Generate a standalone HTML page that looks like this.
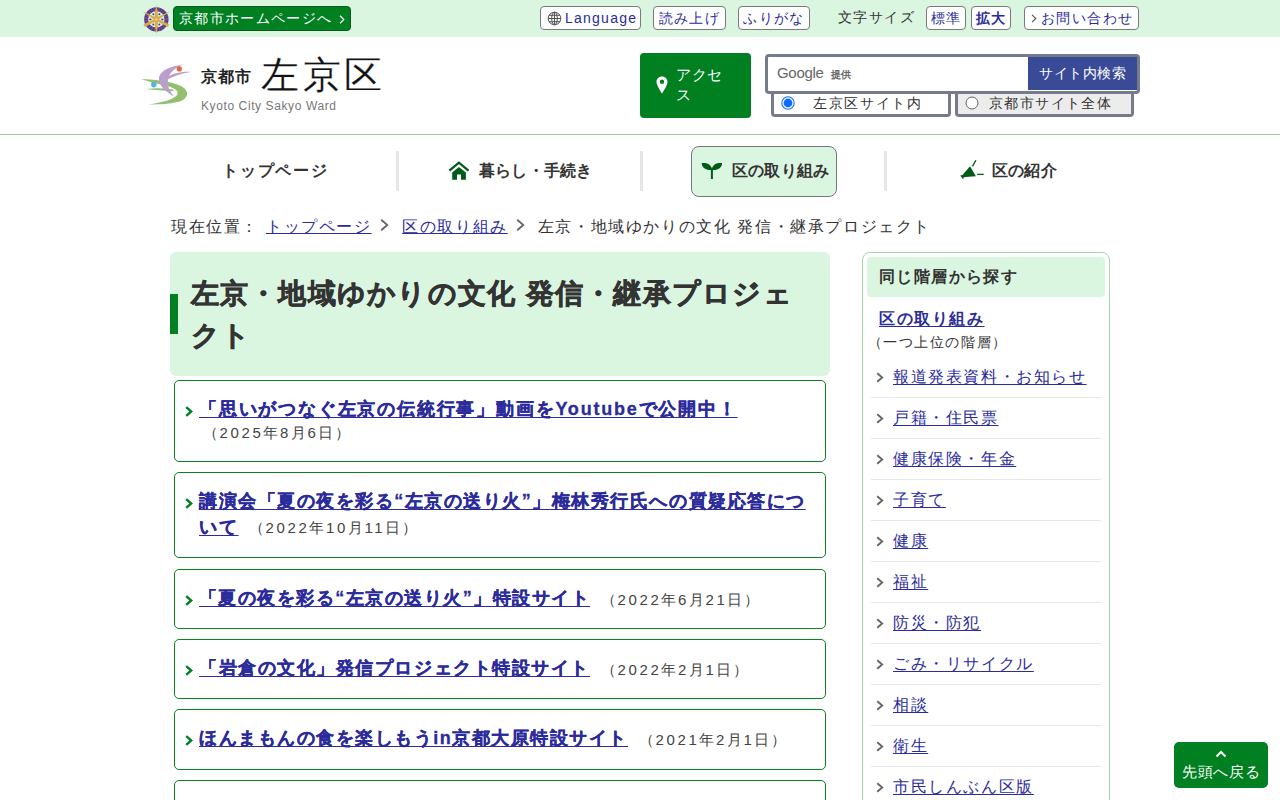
<!DOCTYPE html>
<html lang="ja">
<head>
<meta charset="utf-8">
<title>左京・地域ゆかりの文化 発信・継承プロジェクト</title>
<style>
*{box-sizing:border-box;margin:0;padding:0}
html,body{width:1280px;height:800px;overflow:hidden;background:#fff}
body{font-family:"Liberation Sans",sans-serif;color:#333;position:relative}
a{color:#2b2b9c;text-decoration:underline;text-underline-offset:2px}
.abs{position:absolute}
.nw{white-space:nowrap}
#topbar{position:absolute;left:0;top:0;width:1280px;height:37px;background:#daf5e0}
.tbtn{position:absolute;top:6px;height:24px;border:1px solid #7a7a7a;border-radius:4px;background:#fff;color:#2b2b9c;font-size:14px;line-height:22px;letter-spacing:1.4px;text-align:center;white-space:nowrap}
#homebtn{position:absolute;left:173px;top:6px;width:178px;height:25px;background:#008020;border:1px solid #0b5c1b;border-radius:4px;color:#fff;font-size:14px;line-height:23px;padding-left:5px;letter-spacing:1.35px;white-space:nowrap}
#hdrline{position:absolute;left:0;top:134px;width:1280px;height:1px;background:#9cc9a3}
#access{position:absolute;left:640px;top:53px;width:111px;height:65px;background:#008020;border-radius:4px;color:#fff;font-size:15px;line-height:20px;letter-spacing:0.6px}
#search{position:absolute;z-index:2;left:765px;top:54px;width:375px;height:39.5px;border:3px solid #747b8b;border-radius:4px;background:#fff}
#sbtn{position:absolute;right:0;top:0;width:109px;height:33px;background:#394b97;color:#fff;font-size:14px;line-height:32px;text-align:center;letter-spacing:0.5px}
.rbox{position:absolute;top:91px;height:26px;border:3px solid #747b8b;border-top:none;border-radius:0 0 4px 4px;font-size:14px;line-height:24px;letter-spacing:1.4px;white-space:nowrap;color:#333}
.nav{position:absolute;top:146px;height:51px;font-size:16px;font-weight:bold;color:#333;line-height:50px;white-space:nowrap}
.sep{position:absolute;top:151px;width:3px;height:40px;background:#e6e6e6}
#crumb{position:absolute;left:171px;top:215px;font-size:16px;letter-spacing:1.6px;line-height:24px;white-space:nowrap}
#crumb a{text-underline-offset:1px}
#title{position:absolute;left:170px;top:252px;width:660px;height:124px;background:#daf5e0;border-radius:6px}
.item{position:absolute;left:174px;width:652px;border:1px solid #0a8222;border-radius:5px}
.chev{position:absolute;left:10px}
.ilink{position:absolute;left:24px;font-size:18px;font-weight:bold;line-height:25.6px;letter-spacing:1.8px;white-space:nowrap;-webkit-text-stroke:0.3px #2b2b9c}
.dg{letter-spacing:2.65px}
.idate{position:absolute;font-size:15px;line-height:26px;letter-spacing:1.5px;color:#444;white-space:nowrap}
.side{position:absolute;left:862px;top:252px;width:248px;height:600px;border:1px solid #a3d6ab;border-radius:8px}
.slist{position:absolute;left:8px;top:104px;width:230px;list-style:none}
.slist li{position:relative;height:41px;border-bottom:1px solid #e6e6e6;font-size:16px;line-height:40px;letter-spacing:1.6px;padding-left:22px;white-space:nowrap}
.slist li svg{position:absolute;left:5px;top:15px}
#totop{position:absolute;left:1174px;top:742px;width:94px;height:46px;background:#008020;border-radius:5px;color:#fff;font-size:15px;text-align:center}
</style>
</head>
<body>

<div id="topbar">
  
<svg class="abs" style="left:140px;top:2px" width="35" height="34" viewBox="140 2 35 34">
  <circle cx="156.35" cy="19.4" r="10.2" fill="none" stroke="#54378a" stroke-width="4"/>
  <circle cx="156.35" cy="19.4" r="10.2" fill="none" stroke="#d6b070" stroke-width="4" stroke-dasharray="0.9 1.6" opacity="0.3"/>
  <g fill="#54378a"><ellipse cx="162.35" cy="19.4" rx="1.2" ry="0.9"/><ellipse cx="150.35" cy="19.4" rx="1.2" ry="0.9"/><circle cx="159.35" cy="24.6" r="1"/><circle cx="153.35" cy="24.6" r="1"/><circle cx="153.35" cy="14.2" r="1"/><circle cx="159.35" cy="14.2" r="1"/></g>
  <g fill="#dcab4c">
    <path d="M156.35,5.2 L157.6,11 L158.3,19.4 L157.4,29 L156.35,34.3 L155.3,29 L154.4,19.4 L155.1,11 Z"/>
    <path d="M142.1,11.1 L157.1,18.1 L155.6,20.7 Z"/>
    <path d="M170.6,11.1 L157.1,20.7 L155.6,18.1 Z"/>
    <path d="M143.5,24.5 L155.8,18.3 L156.9,20.5 L144.9,27.1 Z"/>
    <path d="M169.2,24.5 L156.9,18.3 L155.8,20.5 L167.8,27.1 Z"/>
  </g>
  <circle cx="156.35" cy="19.4" r="0.9" fill="#f4eedc"/>
</svg>
  <div id="homebtn">京都市ホームページへ<svg class="abs" style="left:165px;top:8px" width="6" height="9" viewBox="0 0 6 9"><path d="M1 0.8 L4.8 4.5 L1 8.2" fill="none" stroke="#fff" stroke-width="1.2"/></svg></div>
  <div class="tbtn" style="left:540px;width:101px;padding-left:20px;text-align:left"><svg class="abs" style="left:6px;top:4px" width="15" height="15" viewBox="0 0 15 15"><g fill="none" stroke="#555" stroke-width="1"><circle cx="7.5" cy="7.5" r="6.3"/><ellipse cx="7.5" cy="7.5" rx="2.8" ry="6.3"/><path d="M1.2 7.5h12.6M2 4.3h11M2 10.7h11M7.5 1.2v12.6"/></g></svg><span style="margin-left:4px;letter-spacing:1.24px">Language</span></div>
  <div class="tbtn" style="left:653px;width:73px">読み上げ</div>
  <div class="tbtn" style="left:738px;width:72px">ふりがな</div>
  <div class="abs nw" style="left:838px;top:6px;font-size:14px;line-height:22px;letter-spacing:1.4px;color:#333">文字サイズ</div>
  <div class="tbtn" style="left:926px;width:40px">標準</div>
  <div class="tbtn" style="left:971px;width:40px;font-weight:bold">拡大</div>
  <div class="tbtn" style="left:1024px;width:115px;padding-left:15.5px;text-align:left;letter-spacing:1.6px"><svg class="abs" style="left:6px;top:7px" width="6" height="9" viewBox="0 0 6 9"><path d="M1 0.8 L4.8 4.5 L1 8.2" fill="none" stroke="#555" stroke-width="1.1"/></svg>お問い合わせ</div>
</div>

<svg class="abs" style="left:135px;top:55px" width="65" height="60" viewBox="135 55 65 60">
  <path d="M141,79 C152,79.5 170,81 181,86 C189,90 189,97 182,100.5 C174,104 161,104.5 148.5,104.5 C162,102.5 174,99.5 177,95 C180,90 172,86.5 161,84.5 C154,83 147,81 141,79 Z" fill="#92c070"/>
  <path d="M146,89 C155,88 164,88 173,89.5 L174,91.2 C164,90.6 154,90.2 146,89 Z" fill="#92c070"/>
  <path d="M184,64.5 C170,66 159,71 159,79 C159,86 166,92 174,96.5 C170,91.5 167,86 168,80 C169,73 175,67 184,64.5 Z" fill="#bb9fca"/>
  <path d="M165,78.5 C171,73.5 181,71 191.5,71.8 C182,73.5 173,76 166.5,80.5 Z" fill="#bb9fca"/>
  <circle cx="179.3" cy="68.9" r="2.6" fill="#e0653d"/>
  <circle cx="153.8" cy="84.6" r="2.8" fill="#58b2ea"/>
</svg>
<div class="abs nw" style="left:201px;top:64.2px;font-size:15.5px;font-weight:bold;line-height:26px;color:#222;letter-spacing:1px">京都市</div>
<div class="abs nw" style="left:261px;top:49px;font-size:37.5px;line-height:52px;color:#111;letter-spacing:3.6px;-webkit-text-stroke:0.2px #fff">左京区</div>
<div class="abs nw" style="left:201px;top:98px;font-size:12px;line-height:16px;color:#777;letter-spacing:0.6px">Kyoto City Sakyo Ward</div>

<div id="access">
  <svg class="abs" style="left:16px;top:23px" width="12" height="18" viewBox="0 0 12 18"><path d="M6 0.5C2.8 0.5 0.5 2.9 0.5 6 C0.5 9.5 6 17.5 6 17.5 C6 17.5 11.5 9.5 11.5 6 C11.5 2.9 9.2 0.5 6 0.5Z M6 3.6 A2.2 2.2 0 1 1 6 8 A2.2 2.2 0 1 1 6 3.6Z" fill="#fff" fill-rule="evenodd"/></svg>
  <div class="abs" style="left:36px;top:11.5px;width:60px">アクセス</div>
</div>
<div id="search">
  <div class="abs nw" style="left:9px;top:5.5px;font-size:15px;color:#666;line-height:20px;letter-spacing:-0.3px">Google<span style="font-size:10px;font-weight:bold;color:#666;letter-spacing:0;margin-left:7px">提供</span></div>
  <div id="sbtn">サイト内検索</div>
</div>
<div class="rbox" style="left:771px;width:180px;background:#fff">
  <svg class="abs" style="left:6.5px;top:5px" width="14" height="14" viewBox="0 0 14 14"><circle cx="7" cy="7" r="6.2" fill="#fff" stroke="#1a6ff5" stroke-width="1.1"/><circle cx="7" cy="7" r="4.4" fill="#0a6cff"/></svg>
  <span class="abs" style="left:39px;top:0;letter-spacing:1.7px">左京区サイト内</span>
</div>
<div class="rbox" style="left:955px;width:179px;background:#ececec">
  <svg class="abs" style="left:6.5px;top:5px" width="14" height="14" viewBox="0 0 14 14"><circle cx="7" cy="7" r="6" fill="#fff" stroke="#666" stroke-width="1"/></svg>
  <span class="abs" style="left:31px;top:0">京都市サイト全体</span>
</div>
<div id="hdrline"></div>


<div class="nav" style="left:222px;letter-spacing:1.8px">トップページ</div>
<div class="sep" style="left:396px"></div>
<svg class="abs" style="left:440px;top:155px" width="40" height="30" viewBox="440 155 40 30">
  <path d="M449.4,170.7 L458.9,162.6 L468.5,170.7" fill="none" stroke="#005a18" stroke-width="2.2"/>
  <path d="M452.2,172.4 L458.9,167 L465.9,172.4 V179.8 H461 V174.5 H457 V179.8 H452.2 Z" fill="#005a18"/>
</svg>
<div class="nav" style="left:479px;letter-spacing:0.2px">暮らし・手続き</div>
<div class="sep" style="left:640px"></div>
<div class="abs" style="left:691px;top:146px;width:146px;height:51px;background:#daf5e0;border:1px solid #777;border-radius:8px"></div>
<svg class="abs" style="left:695px;top:155px" width="40" height="30" viewBox="695 155 40 30">
  <path d="M712.2,170 C705,170.5 701.5,167 701.8,163 C708,162.3 711.5,165 712.2,170 Z" fill="#005a18"/>
  <path d="M711.6,170 C718.8,170.5 722.3,167 722,163 C715.8,162.3 712.3,165 711.6,170 Z" fill="#005a18"/>
  <rect x="710.9" y="168.5" width="2" height="10.5" fill="#005a18"/>
</svg>
<div class="nav" style="left:732px;letter-spacing:0.2px">区の取り組み</div>
<div class="sep" style="left:884px"></div>
<svg class="abs" style="left:952px;top:152px" width="40" height="36" viewBox="952 152 40 36">
  <path d="M970,166.2 L975.9,176.3 C971,176.6 966,177 963.5,177.5 L963.2,179.6 L960.2,175.4 L962.5,175.1 Z" fill="#005a18"/>
  <path d="M972.5,166.4 L975.9,160.3 M977.2,174.3 H983.7" stroke="#005a18" stroke-width="1.3" fill="none"/>
</svg>
<div class="nav" style="left:992px;letter-spacing:0.2px">区の紹介</div>


<div id="crumb">現在位置：<a href="#" style="margin-left:7px">トップページ</a><span style="margin-left:8px"><svg width="9" height="12" viewBox="0 0 9 12" style="vertical-align:1px"><path d="M1.2 0.8 L7.3 6 L1.2 11.2" fill="none" stroke="#666" stroke-width="1.8"/></svg></span><a href="#" style="margin-left:13.5px">区の取り組み</a><span style="margin-left:8px"><svg width="9" height="12" viewBox="0 0 9 12" style="vertical-align:1px"><path d="M1.2 0.8 L7.3 6 L1.2 11.2" fill="none" stroke="#666" stroke-width="1.8"/></svg></span><span style="margin-left:13px">左京・地域ゆかりの文化 発信・継承プロジェクト</span></div>


<div id="title"><div class="abs" style="left:0;top:42px;width:8px;height:40px;background:#008020"></div>
<div class="abs" style="left:20.5px;top:20.5px;width:630px;font-size:28px;line-height:42.5px;font-weight:bold;color:#333;letter-spacing:1.27px;-webkit-text-stroke:0.6px #333">左京・地域ゆかりの文化 発信・継承プロジェクト</div></div>

<div class="item" style="top:380px;height:82px">
  <span class="chev" style="top:22px"><svg width="8" height="11" viewBox="0 0 8 11"><path d="M1.2 1.2 L6.2 5.5 L1.2 9.8" fill="none" stroke="#008020" stroke-width="2.4"/></svg></span>
  <div class="ilink" style="top:16px;letter-spacing:1.8px"><a href="#">「思いがつなぐ左京の伝統行事」動画をYoutubeで公開中！</a></div>
  <div class="idate" style="left:28px;top:39px">（<span class="dg">2025</span>年<span class="dg">8</span>月<span class="dg">6</span>日）</div>
</div>
<div class="item" style="top:472px;height:86px">
  <span class="chev" style="top:22px"><svg width="8" height="11" viewBox="0 0 8 11"><path d="M1.2 1.2 L6.2 5.5 L1.2 9.8" fill="none" stroke="#008020" stroke-width="2.4"/></svg></span>
  <div class="ilink" style="top:16px;letter-spacing:1.8px"><a href="#"><span style="letter-spacing:1.52px">講演会「夏の夜を彩る“左京の送り火”」梅林秀行氏への質疑応答につ</span><br>いて</a></div>
  <div class="idate" style="left:74px;top:42px">（<span class="dg">2022</span>年<span class="dg">10</span>月<span class="dg">11</span>日）</div>
</div>
<div class="item" style="top:569px;height:60px">
  <span class="chev" style="top:22px"><svg width="8" height="11" viewBox="0 0 8 11"><path d="M1.2 1.2 L6.2 5.5 L1.2 9.8" fill="none" stroke="#008020" stroke-width="2.4"/></svg></span>
  <div class="ilink" style="top:16px;letter-spacing:1.48px"><a href="#">「夏の夜を彩る“左京の送り火”」特設サイト</a></div>
  <div class="idate" style="left:426px;top:17px">（<span class="dg">2022</span>年<span class="dg">6</span>月<span class="dg">21</span>日）</div>
</div>
<div class="item" style="top:639px;height:60px">
  <span class="chev" style="top:22px"><svg width="8" height="11" viewBox="0 0 8 11"><path d="M1.2 1.2 L6.2 5.5 L1.2 9.8" fill="none" stroke="#008020" stroke-width="2.4"/></svg></span>
  <div class="ilink" style="top:16px;letter-spacing:1.55px"><a href="#">「岩倉の文化」発信プロジェクト特設サイト</a></div>
  <div class="idate" style="left:426px;top:17px">（<span class="dg">2022</span>年<span class="dg">2</span>月<span class="dg">1</span>日）</div>
</div>
<div class="item" style="top:709px;height:61px">
  <span class="chev" style="top:22px"><svg width="8" height="11" viewBox="0 0 8 11"><path d="M1.2 1.2 L6.2 5.5 L1.2 9.8" fill="none" stroke="#008020" stroke-width="2.4"/></svg></span>
  <div class="ilink" style="top:16px;letter-spacing:1.52px"><a href="#">ほんまもんの食を楽しもうin京都大原特設サイト</a></div>
  <div class="idate" style="left:464px;top:17px">（<span class="dg">2021</span>年<span class="dg">2</span>月<span class="dg">1</span>日）</div>
</div>
<div class="item" style="top:780px;height:60px"></div>

<div class="side">
  <div class="abs" style="left:4px;top:4px;width:238px;height:40px;background:#daf5e0;border-radius:4px"></div>
  <div class="abs nw" style="left:16px;top:12px;font-size:16px;font-weight:bold;line-height:24px;color:#333;letter-spacing:1.4px">同じ階層から探す</div>
  <div class="abs nw" style="left:16px;top:54px;font-size:16px;font-weight:bold;line-height:24px;letter-spacing:1.6px"><a href="#">区の取り組み</a></div>
  <div class="abs nw" style="left:4.5px;top:79px;font-size:14px;line-height:20px;letter-spacing:1.6px;color:#333">（一つ上位の階層）</div>
  <ul class="slist">
  <li><svg width="8" height="11" viewBox="0 0 8 11"><path d="M1.2 1.2 L6.2 5.5 L1.2 9.8" fill="none" stroke="#666" stroke-width="1.9"/></svg><a href="#">報道発表資料・お知らせ</a></li><li><svg width="8" height="11" viewBox="0 0 8 11"><path d="M1.2 1.2 L6.2 5.5 L1.2 9.8" fill="none" stroke="#666" stroke-width="1.9"/></svg><a href="#">戸籍・住民票</a></li><li><svg width="8" height="11" viewBox="0 0 8 11"><path d="M1.2 1.2 L6.2 5.5 L1.2 9.8" fill="none" stroke="#666" stroke-width="1.9"/></svg><a href="#">健康保険・年金</a></li><li><svg width="8" height="11" viewBox="0 0 8 11"><path d="M1.2 1.2 L6.2 5.5 L1.2 9.8" fill="none" stroke="#666" stroke-width="1.9"/></svg><a href="#">子育て</a></li><li><svg width="8" height="11" viewBox="0 0 8 11"><path d="M1.2 1.2 L6.2 5.5 L1.2 9.8" fill="none" stroke="#666" stroke-width="1.9"/></svg><a href="#">健康</a></li><li><svg width="8" height="11" viewBox="0 0 8 11"><path d="M1.2 1.2 L6.2 5.5 L1.2 9.8" fill="none" stroke="#666" stroke-width="1.9"/></svg><a href="#">福祉</a></li><li><svg width="8" height="11" viewBox="0 0 8 11"><path d="M1.2 1.2 L6.2 5.5 L1.2 9.8" fill="none" stroke="#666" stroke-width="1.9"/></svg><a href="#">防災・防犯</a></li><li><svg width="8" height="11" viewBox="0 0 8 11"><path d="M1.2 1.2 L6.2 5.5 L1.2 9.8" fill="none" stroke="#666" stroke-width="1.9"/></svg><a href="#">ごみ・リサイクル</a></li><li><svg width="8" height="11" viewBox="0 0 8 11"><path d="M1.2 1.2 L6.2 5.5 L1.2 9.8" fill="none" stroke="#666" stroke-width="1.9"/></svg><a href="#">相談</a></li><li><svg width="8" height="11" viewBox="0 0 8 11"><path d="M1.2 1.2 L6.2 5.5 L1.2 9.8" fill="none" stroke="#666" stroke-width="1.9"/></svg><a href="#">衛生</a></li><li><svg width="8" height="11" viewBox="0 0 8 11"><path d="M1.2 1.2 L6.2 5.5 L1.2 9.8" fill="none" stroke="#666" stroke-width="1.9"/></svg><a href="#">市民しんぶん区版</a></li>
  </ul>
</div>


<div id="totop">
  <svg class="abs" style="left:41px;top:7px" width="12" height="9" viewBox="0 0 12 9"><path d="M1.5 7.5 L6 3 L10.5 7.5" fill="none" stroke="#fff" stroke-width="2"/></svg>
  <div class="abs" style="left:0;top:19px;width:94px;line-height:22px;letter-spacing:0.6px;text-indent:0.6px">先頭へ戻る</div>
</div>

</body>
</html>
